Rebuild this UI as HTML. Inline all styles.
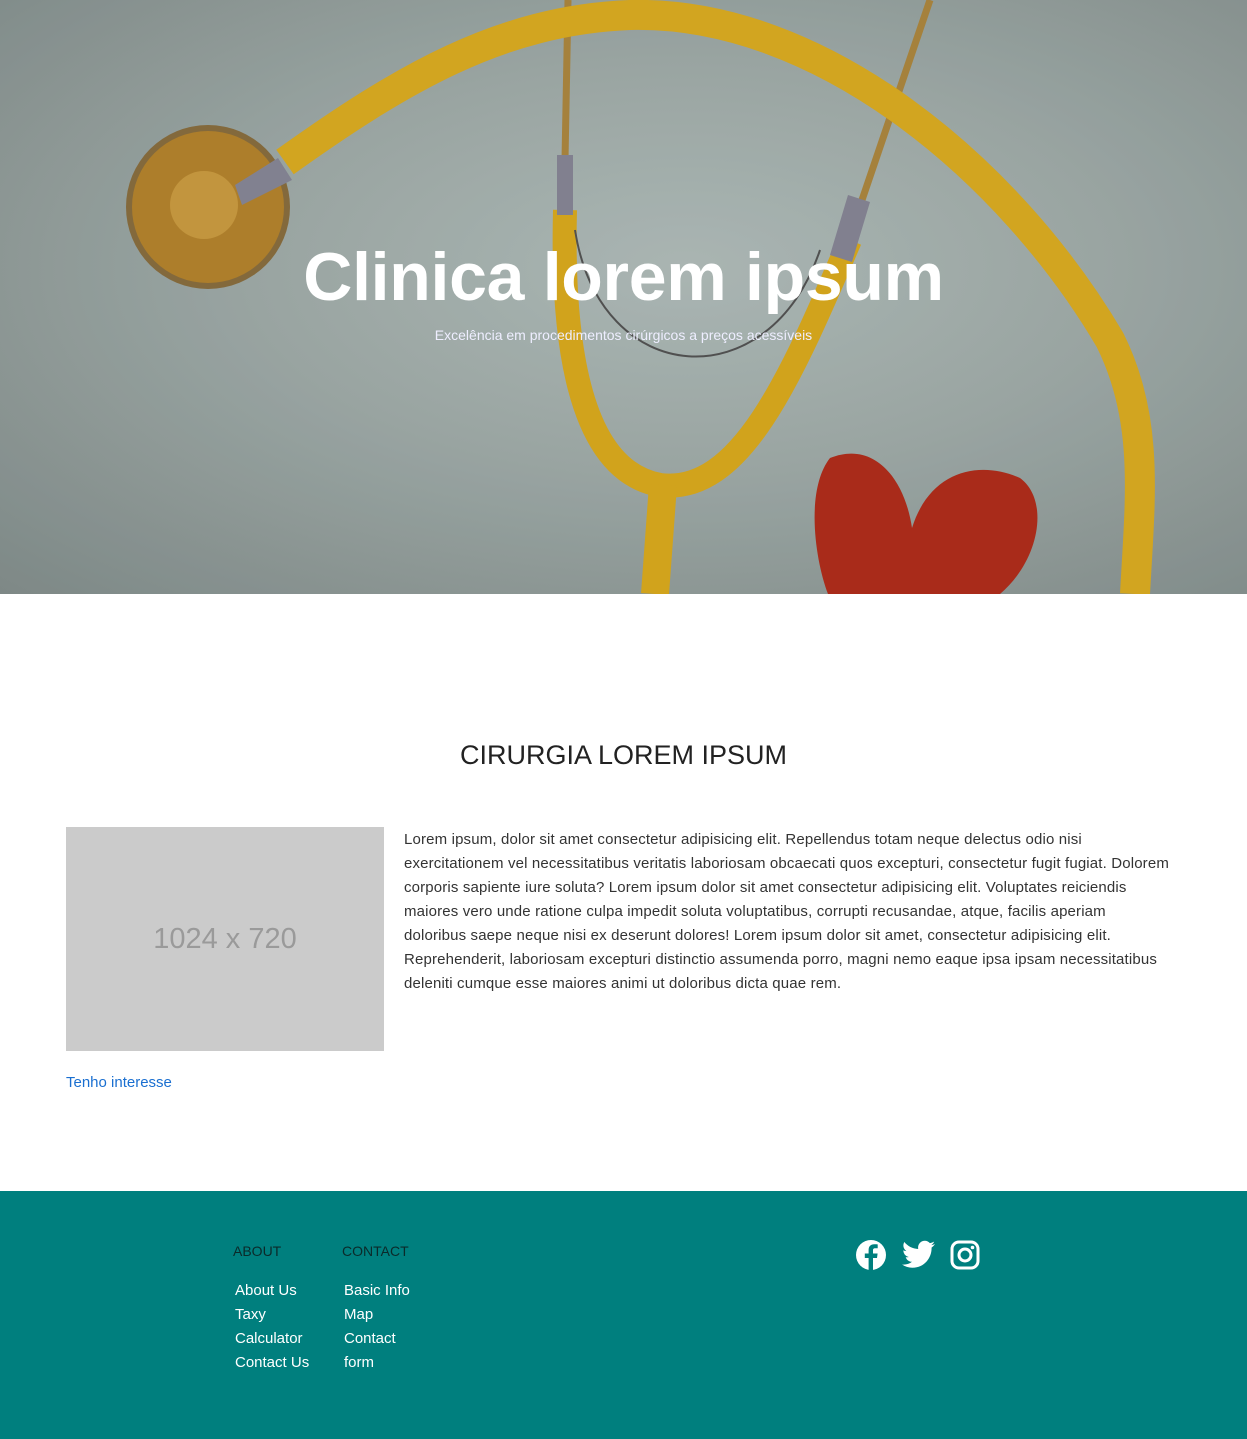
<!DOCTYPE html>
<html><head><meta charset="utf-8">
<style>
*{margin:0;padding:0;box-sizing:border-box}
body{width:1247px;height:1439px;overflow:hidden;font-family:"Liberation Sans",sans-serif;background:#fff;position:relative}
.hero{position:absolute;left:0;top:0;width:1247px;height:594px;overflow:hidden;background:radial-gradient(ellipse at 55% 45%,#b5c1be 0%,#a3afac 45%,#86918f 100%)}
.hero svg{position:absolute;left:0;top:0}
.h1{position:absolute;left:0;width:1247px;top:238px;text-align:center;color:#fff;font-size:68px;font-weight:bold;letter-spacing:-0.3px}
.sub{position:absolute;left:0;width:1247px;top:327px;text-align:center;color:#eef;font-size:14px}
h2{position:absolute;left:0;width:1247px;top:740px;text-align:center;font-size:27px;font-weight:normal;color:#222}
.ph{position:absolute;left:66px;top:827px;width:318px;height:224px;background:#cbcbcb;color:#9a9a9a;font-size:29px;text-align:center;line-height:224px}
.txt{position:absolute;left:404px;top:828px;font-size:15px;letter-spacing:0.15px;line-height:24px;color:#333;white-space:nowrap}
.link{position:absolute;left:66px;top:1074px;color:#1a6fd0;font-size:15px}
footer{position:absolute;left:0;top:1191px;width:1247px;height:248px;background:#007f7e}
.col{position:absolute;top:1243px;font-size:15px}
.col .t{color:#0b2a2a;margin-bottom:20px;margin-left:-2px;font-size:14px}
.col div.l{color:#fff;line-height:24px}
</style></head><body>
<div class="hero">
<svg width="1247" height="594" viewBox="0 0 1247 594">
<path d="M568 0 L565 160" stroke="#b08a40" stroke-width="7" fill="none"/>
<path d="M930 0 L862 200" stroke="#b08a40" stroke-width="7" fill="none"/>
<path d="M565 210 C562 330 575 470 660 485 C740 495 790 380 850 240" stroke="#dfae1e" stroke-width="24" fill="none"/>
<path d="M663 485 L655 594" stroke="#dfae1e" stroke-width="28" fill="none"/>
<rect x="557" y="155" width="16" height="60" fill="#8a8898"/>
<path d="M848 195 L870 202 L852 262 L830 255Z" fill="#8a8898"/>
<path d="M285 162 C400 80 500 20 630 15 C820 10 1010 170 1110 340 C1150 420 1140 500 1135 594" stroke="#e0b022" stroke-width="30" fill="none"/>
<path d="M575 230 C600 390 770 400 820 250" stroke="#555" stroke-width="2" fill="none"/>
<circle cx="208" cy="207" r="82" fill="#8c7040"/>
<circle cx="208" cy="207" r="76" fill="#b8862e"/>
<circle cx="204" cy="205" r="34" fill="#cf9f42"/>
<path d="M235 185 L278 158 L292 180 L242 205Z" fill="#8a8a9a"/>
<path d="M830 458 C805 490 815 560 828 594 L1000 594 C1040 560 1050 500 1020 478 C980 460 930 470 912 528 C905 480 875 440 830 458Z" fill="#b42e1c"/>
<rect width="1247" height="594" fill="rgba(0,0,0,0.06)"/>
</svg>
<div class="h1">Clinica lorem ipsum</div>
<div class="sub">Excelência em procedimentos cirúrgicos a preços acessíveis</div>
</div>
<h2>CIRURGIA LOREM IPSUM</h2>
<div class="ph">1024 x 720</div>
<div class="txt">Lorem ipsum, dolor sit amet consectetur adipisicing elit. Repellendus totam neque delectus odio nisi<br>exercitationem vel necessitatibus veritatis laboriosam obcaecati quos excepturi, consectetur fugit fugiat. Dolorem<br>corporis sapiente iure soluta? Lorem ipsum dolor sit amet consectetur adipisicing elit. Voluptates reiciendis<br>maiores vero unde ratione culpa impedit soluta voluptatibus, corrupti recusandae, atque, facilis aperiam<br>doloribus saepe neque nisi ex deserunt dolores! Lorem ipsum dolor sit amet, consectetur adipisicing elit.<br>Reprehenderit, laboriosam excepturi distinctio assumenda porro, magni nemo eaque ipsa ipsam necessitatibus<br>deleniti cumque esse maiores animi ut doloribus dicta quae rem.</div>
<div class="link">Tenho interesse</div>
<footer></footer>
<div class="col" style="left:235px"><div class="t">ABOUT</div><div class="l">About Us</div><div class="l">Taxy</div><div class="l">Calculator</div><div class="l">Contact Us</div></div>
<div class="col" style="left:344px"><div class="t">CONTACT</div><div class="l">Basic Info</div><div class="l">Map</div><div class="l">Contact</div><div class="l">form</div></div>
<svg style="position:absolute;left:855px;top:1239px" width="32" height="32" viewBox="0 0 32 32"><circle cx="16" cy="16" r="15" fill="#fff"/><path d="M18 31 V19 h4 l0.6-4.5 H18 v-3 c0-1.3.4-2.2 2.3-2.2 h2.4 V5.4 c-.4-.1-1.8-.2-3.5-.2-3.4 0-5.6 2-5.6 5.8 v3.5 H9.8 V19 h3.8 v12Z" fill="#007f7e"/></svg>
<svg style="position:absolute;left:902px;top:1240px" width="33" height="29" viewBox="0 0 24 20"><path d="M24 2.4c-.9.4-1.8.7-2.8.8 1-.6 1.8-1.6 2.2-2.7-1 .6-2 1-3.1 1.2C19.3.7 18 0 16.6 0c-2.7 0-4.9 2.2-4.9 4.9 0 .4 0 .8.1 1.1C7.7 5.8 4.1 3.9 1.7.9c-.4.7-.7 1.6-.7 2.5 0 1.7.9 3.2 2.2 4.1-.8 0-1.6-.2-2.2-.6v.1c0 2.4 1.7 4.4 3.900 4.8-.4.1-.8.2-1.3.2-.3 0-.6 0-.9-.1.6 2 2.4 3.4 4.6 3.4-1.7 1.3-3.8 2.1-6.1 2.1-.4 0-.8 0-1.2-.1C2.2 18.8 4.8 19.6 7.5 19.6c9.1 0 14-7.5 14-14v-.6c1-.7 1.8-1.6 2.5-2.6z" fill="#fff"/></svg>
<svg style="position:absolute;left:950px;top:1240px" width="30" height="30" viewBox="0 0 30 30"><rect x="2" y="2" width="26" height="26" rx="7" fill="none" stroke="#fff" stroke-width="3"/><circle cx="15" cy="15" r="6" fill="none" stroke="#fff" stroke-width="3"/><circle cx="22.5" cy="7.5" r="1.8" fill="#fff"/></svg>
</body></html>
